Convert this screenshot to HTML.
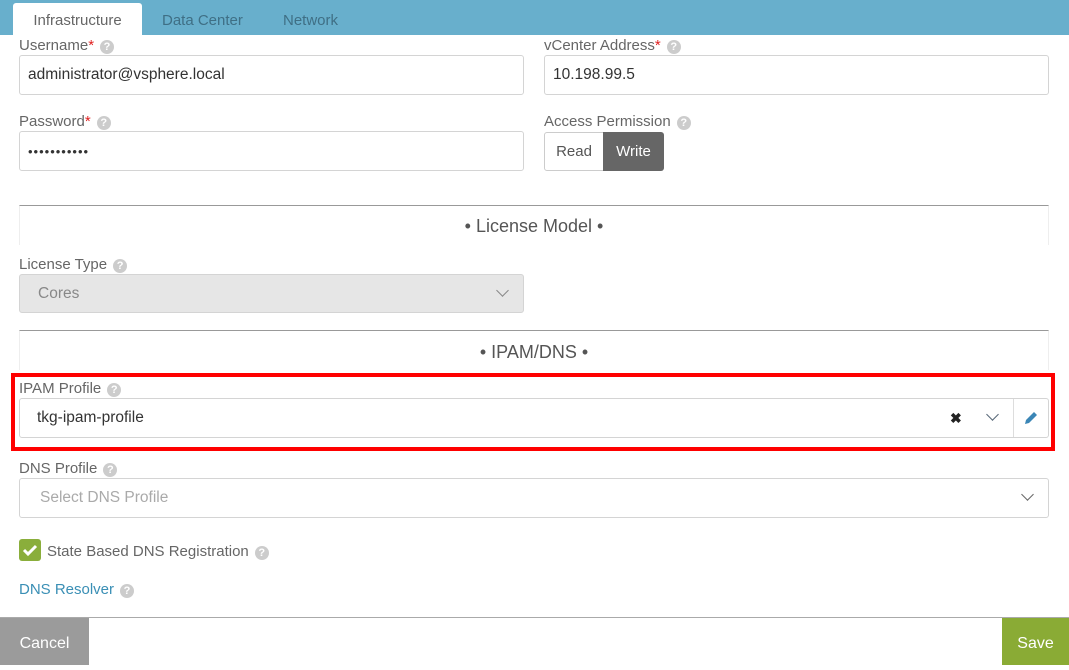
<!DOCTYPE html>
<html><head><style>
*{box-sizing:border-box;margin:0;padding:0}
body{width:1069px;height:665px;position:relative;background:#fff;font-family:"Liberation Sans",sans-serif;color:#555;overflow:hidden}
.a{position:absolute}
.lbl{font-size:15px;color:#666}
.lbl .r{color:#e02020}
.q{display:inline-block;width:14px;height:14px;border-radius:50%;background:#ccc;color:#fff;font-size:11px;line-height:14px;text-align:center;font-weight:bold;vertical-align:0px;margin-left:6px}
.in{border:1px solid #d4d4d4;border-radius:3px;background:#fff;font-size:15.5px;color:#333;padding-left:8px;display:flex;align-items:center}
.sec{border-top:1px solid #999;border-left:1px solid #eee;border-right:1px solid #eee;text-align:center;font-size:18px;color:#555}
.chev{position:absolute;width:9px;height:9px;border-right:1.5px solid #666;border-bottom:1.5px solid #666;transform:rotate(45deg)}
</style></head><body>
<div class="a" style="left:0;top:0;width:1069px;height:35px;background:#68afcc"></div>
<div class="a" style="left:13px;top:3px;width:129px;height:33px;background:#fff;border-radius:3px 3px 0 0;font-size:15px;color:#666;text-align:center;line-height:36px">Infrastructure</div>
<div class="a" style="left:162px;top:12px;font-size:15px;color:#3f6f85">Data Center</div>
<div class="a" style="left:283px;top:12px;font-size:15px;color:#3f6f85">Network</div>

<div class="a lbl" style="left:19px;top:37px">Username<span class="r">*</span><span class="q">?</span></div>
<div class="a in" style="left:19px;top:55px;width:505px;height:40px">administrator@vsphere.local</div>
<div class="a lbl" style="left:544px;top:37px">vCenter Address<span class="r">*</span><span class="q">?</span></div>
<div class="a in" style="left:544px;top:55px;width:505px;height:40px">10.198.99.5</div>

<div class="a lbl" style="left:19px;top:113px">Password<span class="r">*</span><span class="q">?</span></div>
<div class="a in" style="left:19px;top:131px;width:505px;height:40px;font-size:13px;letter-spacing:1px">•••••••••••</div>
<div class="a lbl" style="left:544px;top:113px">Access Permission<span class="q">?</span></div>
<div class="a" style="left:544px;top:132px;width:60px;height:39px;border:1px solid #ccc;border-radius:3px 0 0 3px;font-size:15px;color:#555;text-align:center;line-height:37px">Read</div>
<div class="a" style="left:603px;top:132px;width:61px;height:39px;background:#666;border-radius:0 3px 3px 0;font-size:15px;color:#fff;text-align:center;line-height:39px">Write</div>

<div class="a sec" style="left:19px;top:205px;width:1030px;height:40px;line-height:40px">• License Model •</div>
<div class="a lbl" style="left:19px;top:256px">License Type<span class="q">?</span></div>
<div class="a in" style="left:19px;top:274px;width:505px;height:39px;background:#e6e6e6;color:#888;padding-left:18px">Cores</div>
<div class="chev" style="left:498px;top:286px;border-color:#888"></div>

<div class="a sec" style="left:19px;top:330px;width:1030px;height:40px;line-height:42px">• IPAM/DNS •</div>
<div class="a" style="left:11px;top:373px;width:1044px;height:78px;border:4px solid #f00"></div>
<div class="a lbl" style="left:19px;top:380px">IPAM Profile<span class="q">?</span></div>
<div class="a in" style="left:19px;top:398px;width:1030px;height:40px;padding-left:17px">tkg-ipam-profile</div>
<div class="a" style="left:950px;top:410px;font-size:14px;font-weight:bold;color:#222">✖</div>
<div class="chev" style="left:988px;top:410px;border-color:#567"></div>
<div class="a" style="left:1013px;top:399px;width:1px;height:38px;background:#ddd"></div>
<svg class="a" style="left:1022px;top:409px" width="18" height="18" viewBox="0 0 18 18"><path d="M3 15 L4 11 L12 3 L15 6 L7 14 Z" fill="#3b86b6"/></svg>

<div class="a lbl" style="left:19px;top:460px">DNS Profile<span class="q">?</span></div>
<div class="a in" style="left:19px;top:478px;width:1030px;height:40px;color:#aaa;padding-left:20px">Select DNS Profile</div>
<div class="chev" style="left:1023px;top:490px"></div>

<div class="a" style="left:19px;top:539px;width:22px;height:22px;background:#8aae3b;border-radius:3px"></div>
<svg class="a" style="left:19px;top:539px" width="22" height="22"><path d="M5 11 L9 15 L17 7" stroke="#fff" stroke-width="3" fill="none"/></svg>
<div class="a lbl" style="left:47px;top:543px">State Based DNS Registration<span class="q">?</span></div>
<div class="a" style="left:19px;top:581px;font-size:15px;color:#3a8fb5">DNS Resolver<span class="q">?</span></div>

<div class="a" style="left:0;top:617px;width:1069px;height:1px;background:#aaa"></div>
<div class="a" style="left:0;top:618px;width:89px;height:47px;background:#9b9b9b;color:#fff;font-size:16px;line-height:52px;text-align:center">Cancel</div>
<div class="a" style="left:1002px;top:618px;width:67px;height:47px;background:#8aab35;color:#fff;font-size:16px;line-height:52px;text-align:center">Save</div>
</body></html>
